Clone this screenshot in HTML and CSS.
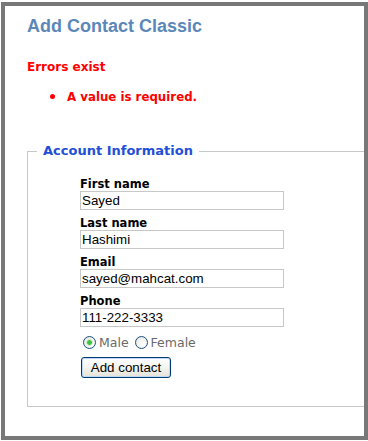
FILE: index.html
```html
<!DOCTYPE html>
<html>
<head>
<meta charset="utf-8">
<link rel="stylesheet" href="styles.css">
</head>
<body>
<div class="frame">
  <h1 class="title">Add Contact Classic</h1>
  <div class="errors">
    <div class="errors-head">Errors exist</div>
    <ul class="errors-list">
      <li>A value is required.</li>
    </ul>
  </div>
  <fieldset class="account">
    <legend class="account-legend">Account Information</legend>
    <div class="account-body">
      <div class="field">
        <label class="field-label" for="fn">First name</label>
        <input class="field-input" id="fn" type="text" value="Sayed">
      </div>
      <div class="field">
        <label class="field-label" for="ln">Last name</label>
        <input class="field-input" id="ln" type="text" value="Hashimi">
      </div>
      <div class="field">
        <label class="field-label" for="em">Email</label>
        <input class="field-input" id="em" type="text" value="sayed@mahcat.com">
      </div>
      <div class="field">
        <label class="field-label" for="ph">Phone</label>
        <input class="field-input" id="ph" type="text" value="111-222-3333">
      </div>
      <div class="gender">
        <label class="gender-opt"><input class="radio" type="radio" name="g" checked>Male</label>
        <label class="gender-opt"><input class="radio" type="radio" name="g">Female</label>
      </div>
      <button class="submit" type="button">Add contact</button>
    </div>
  </fieldset>
</div>
</body>
</html>
```

FILE: styles.css
```css
html, body {
  margin: 0;
  padding: 0;
  background: #ffffff;
}

body {
  font-family: "DejaVu Sans", Verdana, sans-serif;
  font-size: 13px;
}

.frame {
  box-sizing: border-box;
  width: 367px;
  height: 438px;
  margin: 2px 0 0 1px;
  border: 4px solid #787878;
  padding: 0 0 0 22px;
  overflow: hidden;
}

.title {
  margin: 9px 0 0 0;
  font-family: "Liberation Sans", Arial, sans-serif;
  font-size: 18px;
  line-height: 22px;
  font-weight: bold;
  color: #5b87b9;
}

.errors {
  color: #ff0000;
  font-weight: bold;
  font-size: 12px;
}

.errors-head {
  margin-top: 22px;
  line-height: 16px;
}

.errors-list {
  margin: 12px 0 0 0;
  padding-left: 40px;
  line-height: 16px;
  font-size: 11.8px;
}

.errors-list li::marker {
  font-size: 17px;
}

.account {
  box-sizing: border-box;
  width: 420px;
  margin: 38px 0 0 0;
  padding: 18px 0 28px 9px;
  border: 1px solid #c8c8c8;
}

.account-legend {
  padding: 0 6px;
  margin: 0;
  font-size: 13px;
  line-height: 16px;
  font-weight: bold;
  color: #1f4fd6;
}

.account-body {
  padding-left: 43px;
}

.field {
  margin-bottom: 6px;
}

.field-label {
  display: block;
  font-size: 11.5px;
  line-height: 14px;
  font-weight: bold;
  color: #000000;
}

.field-input {
  display: block;
  box-sizing: border-box;
  width: 204px;
  height: 19px;
  margin: 0;
  padding: 0 1px;
  border: 1px solid #c8c8c8;
  font-family: "Liberation Sans", Arial, sans-serif;
  font-size: 13.33px;
  color: #000000;
  background: #ffffff;
  outline: none;
}

.gender {
  display: flex;
  align-items: center;
  gap: 6px;
  height: 18px;
  margin: 3px 0 0 3px;
  color: #6a6a6a;
  font-size: 12.5px;
}

.gender-opt {
  display: flex;
  align-items: center;
  gap: 3px;
}

.radio {
  appearance: none;
  -webkit-appearance: none;
  box-sizing: border-box;
  width: 13px;
  height: 13px;
  margin: 0;
  border: 1px solid #1c5180;
  border-radius: 50%;
  background: radial-gradient(circle at 65% 65%, #ffffff 0%, #f0efe8 60%, #dcdad0 100%);
}

.radio:checked {
  background: radial-gradient(circle, #3cc43c 0 2px, #a8e0a8 2.5px, transparent 3.5px),
    radial-gradient(circle at 65% 65%, #ffffff 0%, #f0efe8 60%, #dcdad0 100%);
}

.submit {
  display: block;
  box-sizing: border-box;
  width: 90px;
  height: 21px;
  margin: 6px 0 0 1px;
  padding: 0;
  border: 1px solid #003c74;
  border-radius: 3px;
  background: linear-gradient(#ffffff 0%, #f4f4f0 50%, #e4e2d8 100%);
  box-shadow: inset 0 0 0 1px #c0d8f8;
  font-family: "Liberation Sans", Arial, sans-serif;
  font-size: 13.33px;
  color: #000000;
}
```
